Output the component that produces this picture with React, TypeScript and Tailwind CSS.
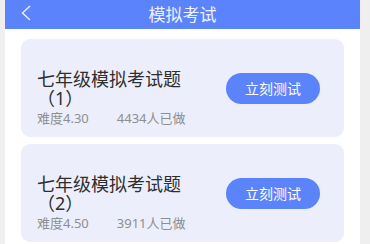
const exams = [
    { id: 1, title: "七年级模拟考试题（1）", level: "4.30", done: 4434 },
    { id: 2, title: "七年级模拟考试题（2）", level: "4.50", done: 3911 },
];

function ExamCard({ title, level, done }: { title: string; level: string; done: number }) {
    return (
        <div className="flex h-[98px] items-start justify-between rounded-[9px] bg-[#eceefb] pl-4 pr-6 pt-[31px]">
            <div className="flex flex-col">
                <p className="w-[150px] text-[18px] leading-[19px] text-[#2e2e2e]">{title}</p>
                <div className="mt-[1px] flex text-[13px] leading-[19px] text-[#8e8e8e]">
                    <span>难度{level}</span>
                    <span className="ml-[28px]">{done}人已做</span>
                </div>
            </div>
            <button className="mt-[3px] h-[31px] w-[94px] rounded-full bg-[#5b83fa] text-[14px] text-white">
                立刻测试
            </button>
        </div>
    );
}

export default function App() {
    return (
        <div
            className="flex h-[244px] w-[370px] overflow-hidden bg-[#efefef] pl-[5px]"
            style={{ fontFamily: '"Noto Sans", "Noto Sans CJK SC", sans-serif' }}
        >
            <div className="flex w-[355px] flex-col bg-white">
                <header className="relative flex h-[29px] shrink-0 items-center justify-center bg-[#5b83fc]">
                    <svg
                        className="absolute left-[15px] top-[5px]"
                        width="12"
                        height="16"
                        viewBox="0 0 12 16"
                        fill="none"
                        stroke="#eef2ff"
                        strokeWidth="1.4"
                    >
                        <path d="M10 1 L2.5 8 L10 15" />
                    </svg>
                    <h1 className="text-[17px] leading-none text-[#eef2ff]">模拟考试</h1>
                </header>
                <div className="flex flex-col gap-[7px] px-4 pt-[10px]">
                    {exams.map((e) => (
                        <ExamCard key={e.id} title={e.title} level={e.level} done={e.done} />
                    ))}
                </div>
            </div>
        </div>
    );
}
